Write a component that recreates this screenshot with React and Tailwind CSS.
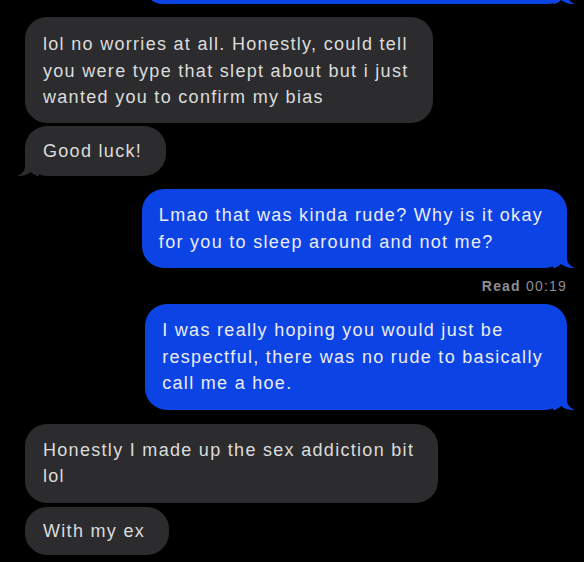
import React from 'react';

const font = { fontFamily: '"Liberation Sans", Arial, sans-serif' };

function Tail({ side, color }) {
  // little iMessage tail hanging off the bottom corner
  if (side === 'left') {
    return (
      <svg className="absolute bottom-0 left-[-8px]" width="22" height="22" viewBox="0 0 22 22">
        <path d="M8 0 L8 12 C8 17 5 20 0 22 C5 22.5 10 21 14 18 C16 20 19 22 22 22 L22 0 Z" fill={color} />
      </svg>
    );
  }
  return (
    <svg className="absolute bottom-0 right-[-8px]" width="22" height="22" viewBox="0 0 22 22">
      <path d="M14 0 L14 12 C14 17 17 20 22 22 C17 22.5 12 21 8 18 C6 20 3 22 0 22 L0 0 Z" fill={color} />
    </svg>
  );
}

function Incoming({ children, tail, className = '' }) {
  return (
    <div className={`relative ml-[25px] w-fit rounded-[22px] bg-[#2c2c2e] pl-[18px] pr-[24px] text-[18px] tracking-[1.3px] leading-[26.5px] text-[#dcdcdc] whitespace-nowrap ${className}`}>
      {children}
      {tail && <Tail side="left" color="#2c2c2e" />}
    </div>
  );
}

function Outgoing({ children, className = 'w-fit' }) {
  return (
    <div className={`relative ml-auto mr-[17px] rounded-[22px] bg-[#0b43e4] pl-[17px] pr-[24px] text-[18px] tracking-[1.3px] leading-[26.5px] text-[#ececf4] whitespace-nowrap ${className}`}>
      {children}
      <Tail side="right" color="#0b43e4" />
    </div>
  );
}

export default function App() {
  return (
    <div className="w-[584px] h-[562px] bg-black overflow-hidden flex flex-col" style={font}>
      {/* previous message, scrolled mostly out of view */}
      <Outgoing className="w-[424px] h-[40px] mt-[-36px]">&nbsp;</Outgoing>

      <Incoming className="mt-[13px] pt-[14px] pb-[12px]">
        lol no worries at all. Honestly, could tell<br />
        you were type that slept about but i just<br />
        wanted you to confirm my bias
      </Incoming>

      <Incoming tail className="mt-[3px] py-[12px] pr-[20px]">
        Good luck!
      </Incoming>

      <Outgoing className="w-fit mt-[13px] pt-[13px] pb-[13px]">
        Lmao that was kinda rude? Why is it okay<br />
        for you to sleep around and not me?
      </Outgoing>

      <div className="mt-[10px] mr-[17px] self-end text-[14px] tracking-[1.2px] leading-[16px] text-[#8d8d92]">
        <span className="font-bold">Read</span> 00:19
      </div>

      <Outgoing className="w-fit mt-[10px] pt-[13px] pb-[13px]">
        I was really hoping you would just be<br />
        respectful, there was no rude to basically<br />
        call me a hoe.
      </Outgoing>

      <Incoming className="mt-[14px] py-[13px]">
        Honestly I made up the sex addiction bit<br />
        lol
      </Incoming>

      <Incoming className="mt-[4px] py-[11px] pr-[22px]">
        With my ex
      </Incoming>
    </div>
  );
}
